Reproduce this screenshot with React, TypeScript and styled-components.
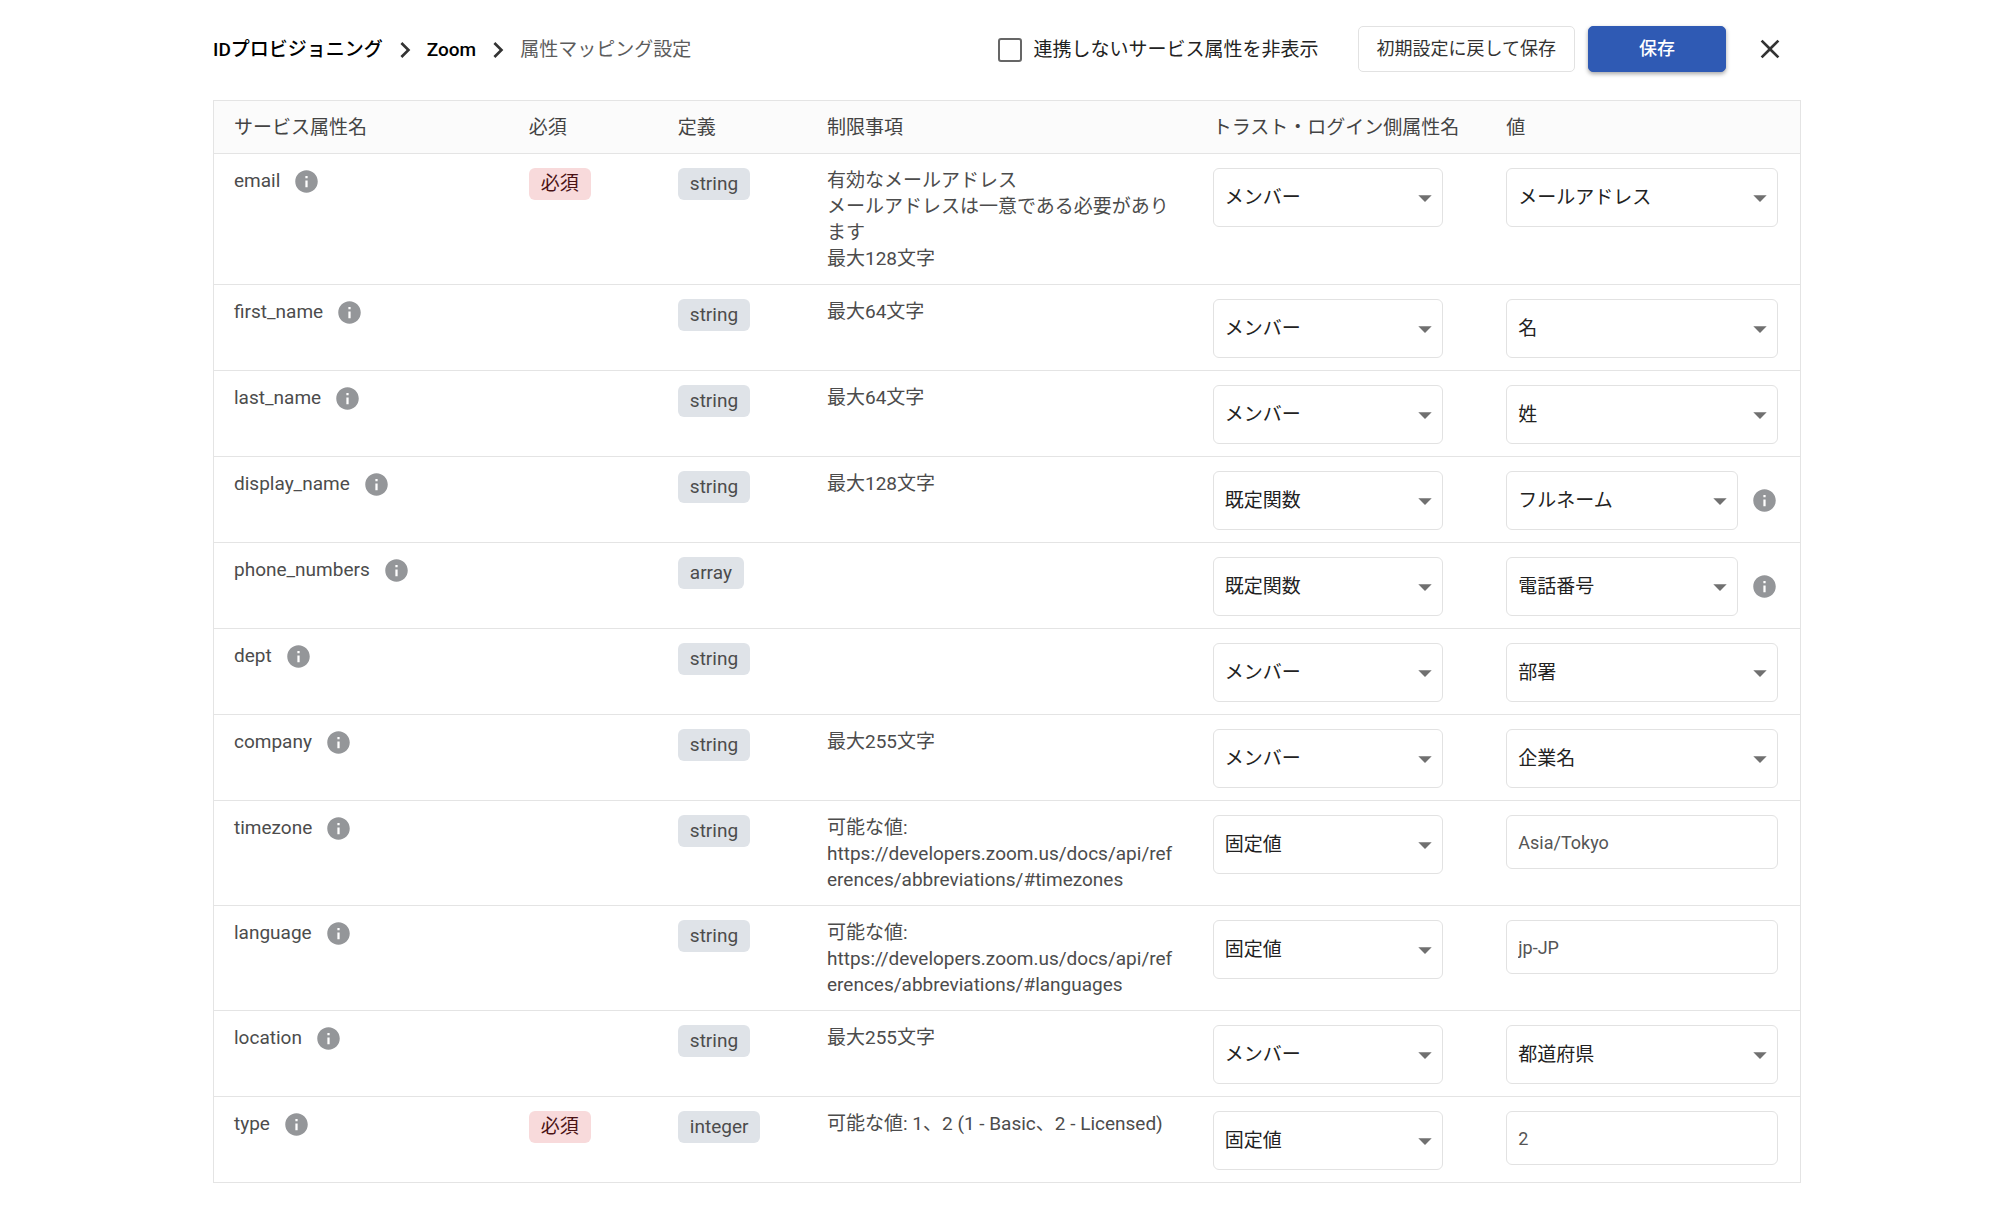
import React, { useState } from "react";
import styled, { createGlobalStyle, css } from "styled-components";
import { MdArrowDropDown, MdChevronRight, MdClose, MdInfo } from "react-icons/md";

const GlobalStyle = createGlobalStyle`
  *, *::before, *::after { box-sizing: border-box; }
  body {
    margin: 0;
    background: #fff;
    color: #4c4c4c;
    font-family: Roboto, "Noto Sans CJK JP", sans-serif;
    font-size: 19px;
    line-height: 26px;
  }
  button, input, select { font: inherit; }
`;

const Page = styled.main`
  padding: 26px 202px 40px 213px;
`;

const TopBar = styled.header`
  display: flex;
  align-items: center;
  justify-content: space-between;
  height: 46px;
  margin-bottom: 28px;
  white-space: nowrap;
`;

const Breadcrumb = styled.nav`
  display: flex;
  align-items: center;
  gap: 6px;
  padding-top: 2px;
  color: #5c5c5c;

  svg { color: #333; }
`;

const CrumbLink = styled.a`
  color: #000;
  font-weight: 500;
  text-decoration: none;
`;

const Actions = styled.div`
  display: flex;
  align-items: center;
  gap: 13px;
`;

const CheckLabel = styled.label`
  display: flex;
  align-items: center;
  gap: 12px;
  margin-right: 26px;
  padding-top: 2px;
  color: #222;
`;

const Checkbox = styled.input`
  appearance: none;
  width: 24px;
  height: 24px;
  margin: 0;
  border: 2px solid #666;
  border-radius: 3px;

  &:checked { background: #2f5ab4; border-color: #2f5ab4; }
`;

const Button = styled.button<{ $primary?: boolean }>`
  height: 46px;
  padding: 0 18px;
  border: 1px solid #e2e2e2;
  border-radius: 5px;
  background: #fff;
  color: #333;
  font-size: 18px;

  ${(p) =>
    p.$primary &&
    css`
      min-width: 138px;
      border-color: #2f5ab4;
      background: #2f5ab4;
      color: #fff;
      font-weight: 500;
      box-shadow: 0 2px 4px rgba(0, 0, 0, 0.35);
    `}
`;

const IconButton = styled.button`
  display: flex;
  flex: none;
  padding: 0;
  border: 0;
  background: none;
  color: #949699;
`;

const CloseButton = styled(IconButton)`
  margin: 0 15px;
  color: #333;
`;

const Table = styled.table`
  width: 100%;
  table-layout: fixed;
  border-collapse: collapse;
  border: 1px solid #e4e4e4;
`;

const Col = styled.col<{ $share: number }>`
  width: ${(p) => p.$share}%;
`;

const HeadCell = styled.th`
  height: 53px;
  padding: 2px 0 0 20px;
  background: #fbfbfb;
  color: #444;
  font-weight: 400;
  text-align: left;
  white-space: nowrap;
`;

const Row = styled.tr`
  border-top: 1px solid #e4e4e4;
`;

const Cell = styled.td<{ $end?: number }>`
  padding: 14px ${(p) => p.$end ?? 14}px 12px 20px;
  vertical-align: top;
  word-break: break-all;
`;

const Name = styled.div`
  display: flex;
  align-items: center;
  gap: 13px;
  height: 26px;
`;

const Chip = styled.span<{ $required?: boolean }>`
  display: inline-block;
  padding: 0 12px;
  border-radius: 6px;
  background: ${(p) => (p.$required ? "#f8dadb" : "#dfe3e8")};
  color: ${(p) => (p.$required ? "#4a1214" : "#4c4c4c")};
  line-height: 32px;
  vertical-align: top;
  white-space: nowrap;
`;

const ValueBox = styled.div`
  display: flex;
  align-items: center;
  gap: 13px;
`;

const SelectBox = styled.div`
  display: grid;
  flex: 1;
  align-items: center;

  > * { grid-area: 1 / 1; }

  > svg {
    justify-self: end;
    margin-right: 2px;
    color: #707070;
    pointer-events: none;
  }
`;

const field = css`
  width: 100%;
  padding: 0 11px;
  border: 1px solid #e2e2e2;
  border-radius: 6px;
  background: #fff;
`;

const Select = styled.select`
  ${field}
  appearance: none;
  height: 59px;
  color: #222;
`;

const TextField = styled.input`
  ${field}
  display: block;
  height: 54px;
  color: #555;
  font-size: 18px;
`;

type Attribute = {
  name: string;
  required?: boolean;
  type: string;
  limits: string[];
  source: string;
  value: string;
};

const SOURCES = ["メンバー", "既定関数", "固定値"];
const MEMBER_VALUES = ["メールアドレス", "名", "姓", "部署", "企業名", "都道府県"];
const FUNCTION_VALUES = ["フルネーム", "電話番号"];

const ATTRIBUTES: Attribute[] = [
  {
    name: "email",
    required: true,
    type: "string",
    limits: ["有効なメールアドレス", "メールアドレスは一意である必要があります", "最大128文字"],
    source: "メンバー",
    value: "メールアドレス",
  },
  { name: "first_name", type: "string", limits: ["最大64文字"], source: "メンバー", value: "名" },
  { name: "last_name", type: "string", limits: ["最大64文字"], source: "メンバー", value: "姓" },
  { name: "display_name", type: "string", limits: ["最大128文字"], source: "既定関数", value: "フルネーム" },
  { name: "phone_numbers", type: "array", limits: [], source: "既定関数", value: "電話番号" },
  { name: "dept", type: "string", limits: [], source: "メンバー", value: "部署" },
  { name: "company", type: "string", limits: ["最大255文字"], source: "メンバー", value: "企業名" },
  {
    name: "timezone",
    type: "string",
    limits: ["可能な値:", "https://developers.zoom.us/docs/api/references/abbreviations/#timezones"],
    source: "固定値",
    value: "Asia/Tokyo",
  },
  {
    name: "language",
    type: "string",
    limits: ["可能な値:", "https://developers.zoom.us/docs/api/references/abbreviations/#languages"],
    source: "固定値",
    value: "jp-JP",
  },
  { name: "location", type: "string", limits: ["最大255文字"], source: "メンバー", value: "都道府県" },
  {
    name: "type",
    required: true,
    type: "integer",
    limits: ["可能な値: 1、2 (1 - Basic、2 - Licensed)"],
    source: "固定値",
    value: "2",
  },
];

function Dropdown({ label, options, initial }: { label: string; options: string[]; initial: string }) {
  return (
    <SelectBox>
      <Select aria-label={label} defaultValue={initial}>
        {options.map((o) => (
          <option key={o}>{o}</option>
        ))}
      </Select>
      <MdArrowDropDown size={32} />
    </SelectBox>
  );
}

function InfoButton({ label }: { label: string }) {
  return (
    <IconButton type="button" aria-label={label}>
      <MdInfo size={27} />
    </IconButton>
  );
}

function AttributeRow({ item }: { item: Attribute }) {
  const isFunction = item.source === "既定関数";
  return (
    <Row>
      <Cell>
        <Name>
          {item.name}
          <InfoButton label={`${item.name} 説明`} />
        </Name>
      </Cell>
      <Cell>{item.required && <Chip $required>必須</Chip>}</Cell>
      <Cell>
        <Chip>{item.type}</Chip>
      </Cell>
      <Cell>
        {item.limits.map((line) => (
          <div key={line}>{line}</div>
        ))}
      </Cell>
      <Cell $end={43}>
        <Dropdown label={`${item.name} 側属性名`} options={SOURCES} initial={item.source} />
      </Cell>
      <Cell $end={22}>
        {item.source === "固定値" ? (
          <TextField type="text" aria-label={`${item.name} 値`} defaultValue={item.value} />
        ) : (
          <ValueBox>
            <Dropdown
              label={`${item.name} 値`}
              options={isFunction ? FUNCTION_VALUES : MEMBER_VALUES}
              initial={item.value}
            />
            {isFunction && <InfoButton label={`${item.value} 説明`} />}
          </ValueBox>
        )}
      </Cell>
    </Row>
  );
}

const COLUMNS = [
  { title: "サービス属性名", share: 18.6 },
  { title: "必須", share: 9.4 },
  { title: "定義", share: 9.4 },
  { title: "制限事項", share: 24.3 },
  { title: "トラスト・ログイン側属性名", share: 18.5 },
  { title: "値", share: 19.8 },
];

export default function App() {
  const [hidden, setHidden] = useState(false);
  return (
    <Page lang="ja">
      <GlobalStyle />
      <TopBar>
        <Breadcrumb>
          <CrumbLink href="#provisioning">IDプロビジョニング</CrumbLink>
          <MdChevronRight size={32} />
          <CrumbLink href="#zoom">Zoom</CrumbLink>
          <MdChevronRight size={32} />
          <span>属性マッピング設定</span>
        </Breadcrumb>
        <Actions>
          <CheckLabel>
            <Checkbox type="checkbox" checked={hidden} onChange={(e) => setHidden(e.target.checked)} />
            連携しないサービス属性を非表示
          </CheckLabel>
          <Button type="button">初期設定に戻して保存</Button>
          <Button type="button" $primary>
            保存
          </Button>
          <CloseButton type="button" aria-label="閉じる">
            <MdClose size={32} />
          </CloseButton>
        </Actions>
      </TopBar>
      <Table>
        <colgroup>
          {COLUMNS.map((c) => (
            <Col key={c.title} $share={c.share} />
          ))}
        </colgroup>
        <thead>
          <tr>
            {COLUMNS.map((c) => (
              <HeadCell key={c.title} scope="col">
                {c.title}
              </HeadCell>
            ))}
          </tr>
        </thead>
        <tbody>
          {ATTRIBUTES.map((item) => (
            <AttributeRow key={item.name} item={item} />
          ))}
        </tbody>
      </Table>
    </Page>
  );
}
